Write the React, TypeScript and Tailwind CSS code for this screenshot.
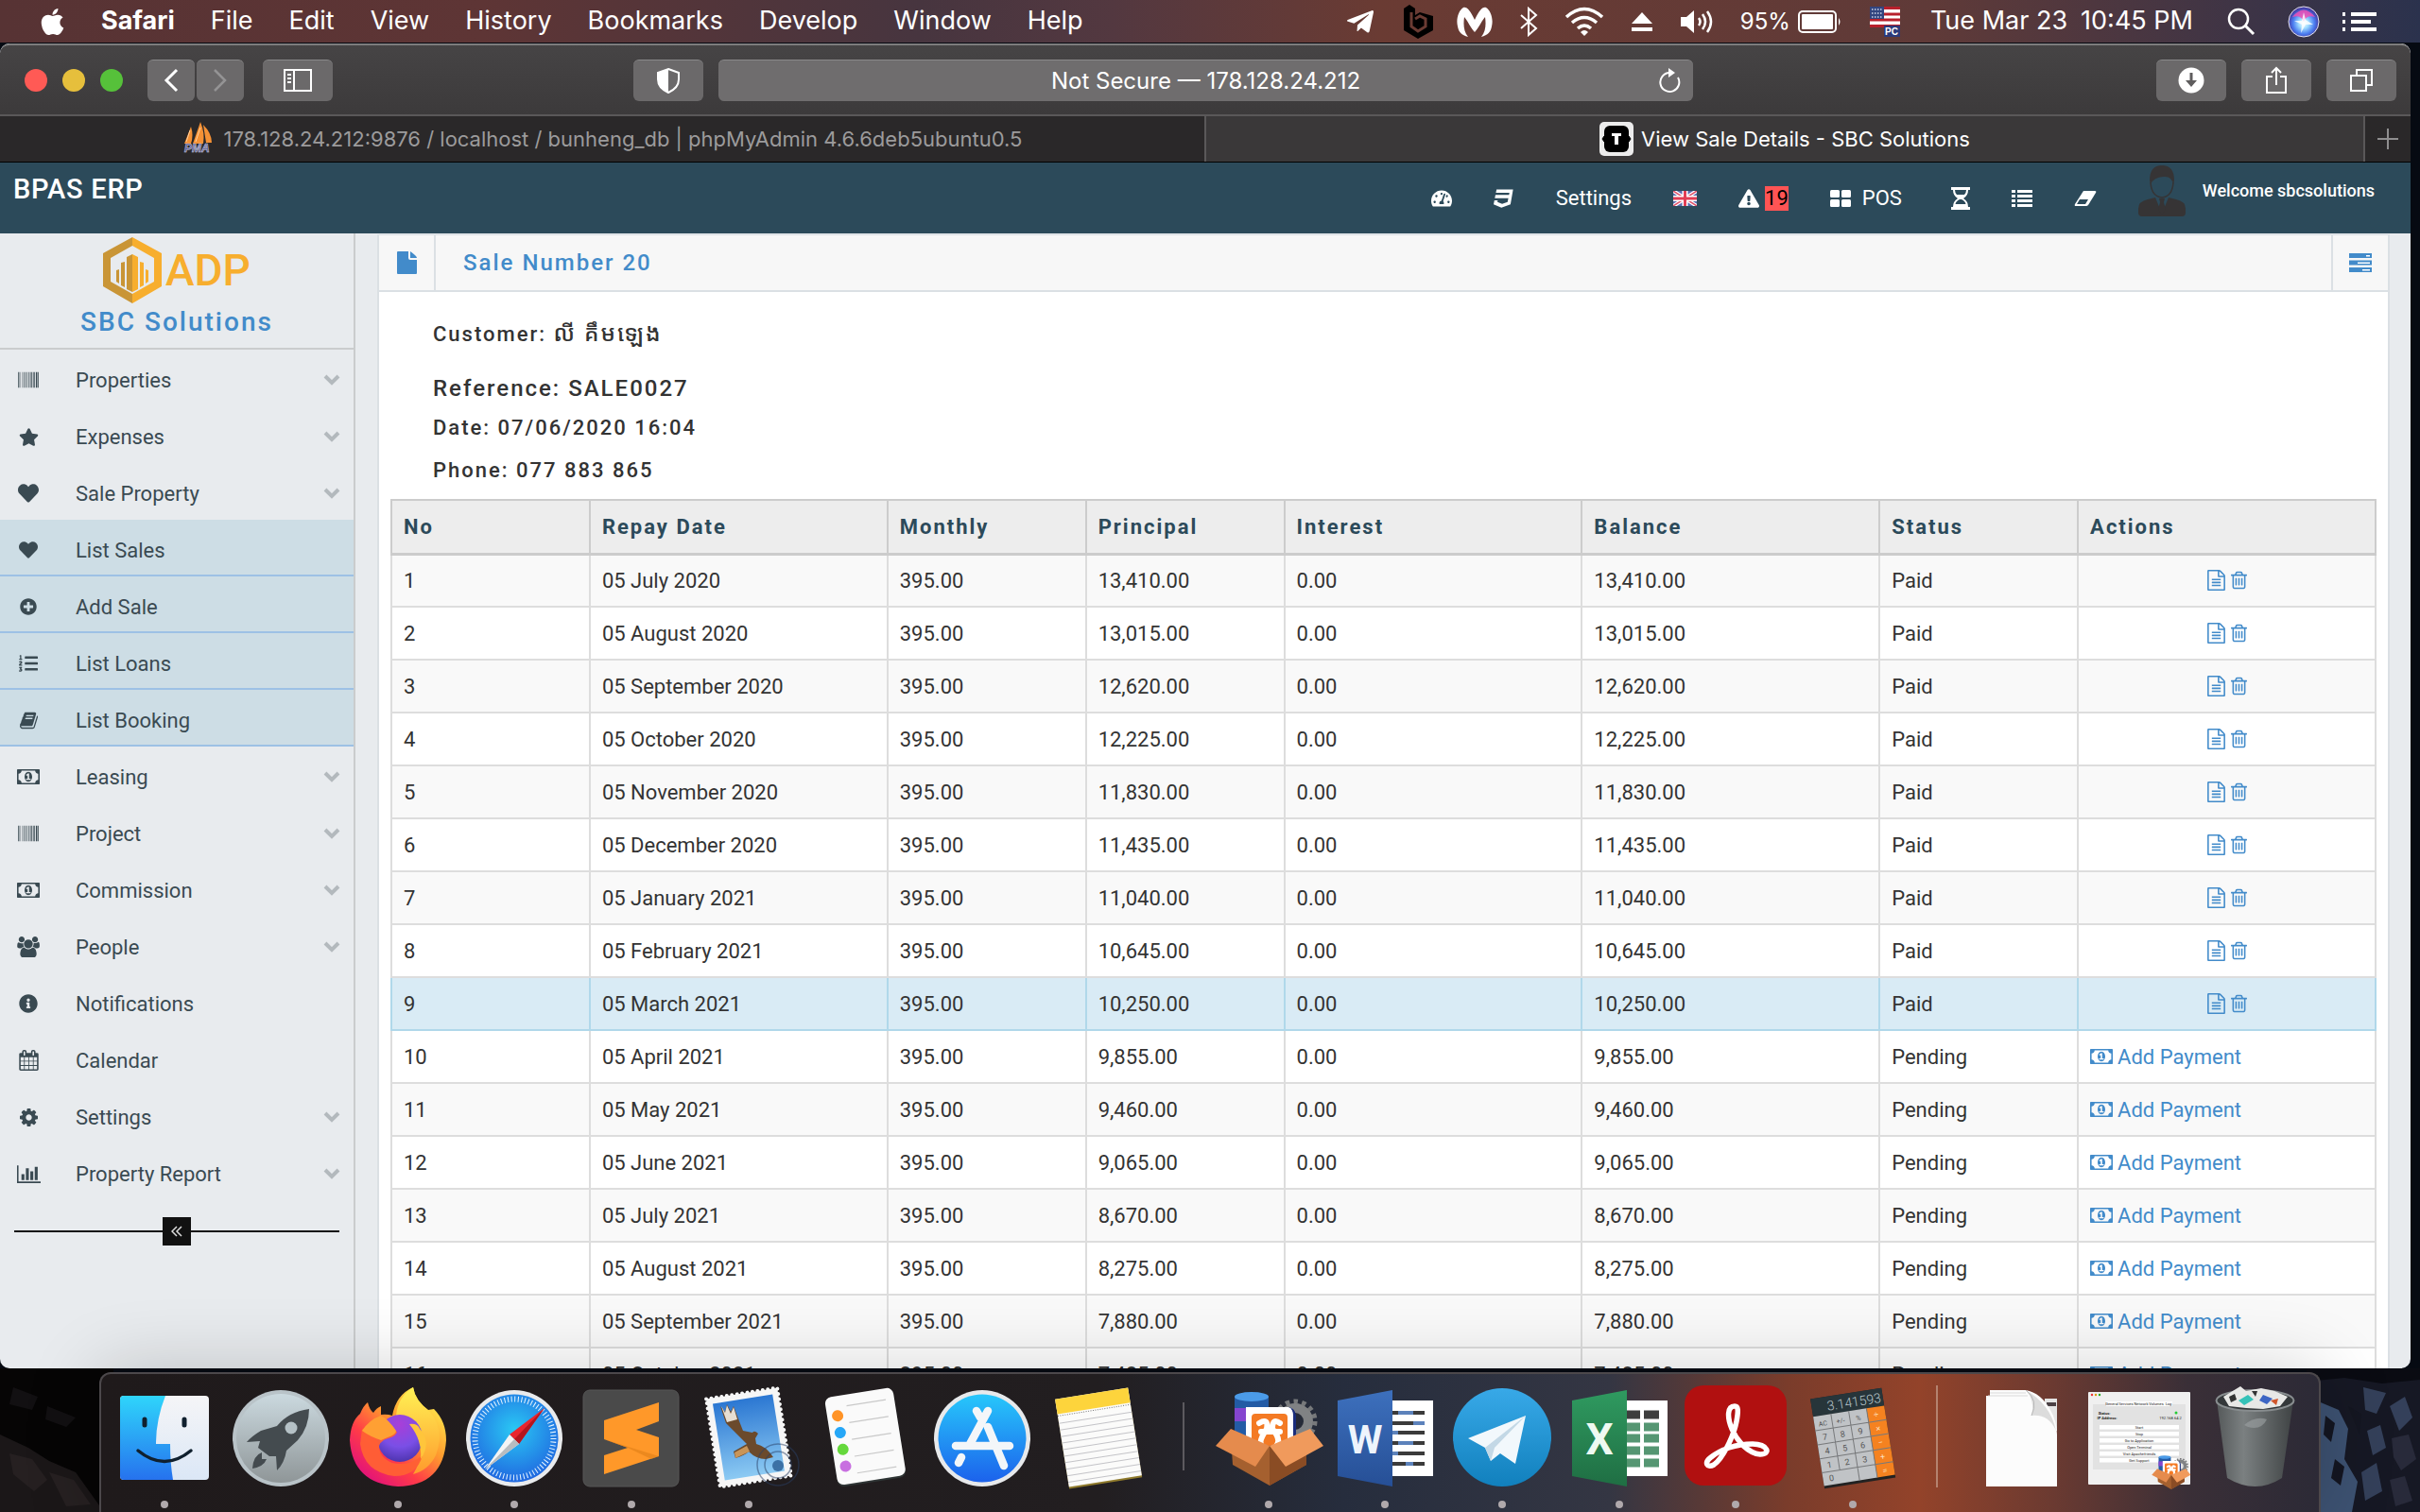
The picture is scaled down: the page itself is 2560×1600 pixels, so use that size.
import React from "react";
import type { ReactNode } from "react";
import { FaBarcode, FaStar, FaHeart, FaPlusCircle, FaListOl, FaInfoCircle, FaTachometerAlt, FaCss3, FaExclamationTriangle, FaApple, FaTelegramPlane } from "react-icons/fa";

/* ---------- small glyphs ---------- */

function Glyph({ box, d, className }: { box: string; d: string; className: string }) {
  return (
    <svg viewBox={box} className={className} fill="currentColor" aria-hidden="true">
      <path d={d} />
    </svg>
  );
}

const FILE_TEXT =
  "M1468 380q28 28 48 76t20 88v1152q0 40-28 68t-68 28h-1344q-40 0-68-28t-28-68v-1600q0-40 28-68t68-28h896q40 0 88 20t76 48zM1024 136v376h376q-10-29-22-41l-313-313q-12-12-41-22zM1408 1664v-1024h-416q-40 0-68-28t-28-68v-416h-768v1536h1280zM384 800q0-14 9-23t23-9h704q14 0 23 9t9 23v64q0 14-9 23t-23 9h-704q-14 0-23-9t-9-23v-64zM1120 1024q14 0 23 9t9 23v64q0 14-9 23t-23 9h-704q-14 0-23-9t-9-23v-64q0-14 9-23t23-9h704zM1120 1280q14 0 23 9t9 23v64q0 14-9 23t-23 9h-704q-14 0-23-9t-9-23v-64q0-14 9-23t23-9h704z";
const TRASH =
  "M512 736v576q0 14-9 23t-23 9h-64q-14 0-23-9t-9-23v-576q0-14 9-23t23-9h64q14 0 23 9t9 23zM768 736v576q0 14-9 23t-23 9h-64q-14 0-23-9t-9-23v-576q0-14 9-23t23-9h64q14 0 23 9t9 23zM1024 736v576q0 14-9 23t-23 9h-64q-14 0-23-9t-9-23v-576q0-14 9-23t23-9h64q14 0 23 9t9 23zM1152 1460v-948h-896v948q0 22 7 40.5t14.5 27 10.5 8.5h832q3 0 10.5-8.5t14.5-27 7-40.5zM480 384h448l-48-117q-7-9-17-11h-317q-10 2-17 11zM1408 416v64q0 14-9 23t-23 9h-96v948q0 83-47 143.5t-113 60.5h-832q-66 0-113-58.5t-47-141.5v-952h-96q-14 0-23-9t-9-23v-64q0-14 9-23t23-9h309l70-167q15-37 54-63t79-26h320q40 0 79 26t54 63l70 167h309q14 0 23 9t9 23z";
const MONEY =
  "M768 1152h384v-96h-128v-448h-114l-148 137 77 80q42-37 55-57h2v288h-128v96zM1280 896q0 70-21 142t-59.5 134-101.5 101-138 39-138-39-101.5-101-59.5-134-21-142 21-142 59.5-134 101.5-101 138-39 138 39 101.5 101 59.5 134 21 142zM1792 1152v-512q-106 0-181-75t-75-181h-1152q0 106-75 181t-181 75v512q106 0 181 75t75 181h1152q0-106 75-181t181-75zM1920 320v1152q0 26-19 45t-45 19h-1792q-26 0-45-19t-19-45v-1152q0-26 19-45t45-19h1792q26 0 45 19t19 45z";
const USERS =
  "M593 896q-162 5-265 128h-134q-82 0-138-40.5t-56-118.5q0-353 124-353 6 0 43.5 21t97.5 42.5 119 21.5q67 0 133-23-5 37-5 66 0 159 93 290zM1664 1533q0 120-73 189.5t-194 69.5h-874q-121 0-194-69.5t-73-189.5q0-53 3.5-103.5t14-109 26.5-108.5 43-97.5 62-81 85.5-53.5 111.5-20q10 0 43 21.5t73 48 107 48 135 21.5 135-21.5 107-48 73-48 43-21.5q61 0 111.5 20t85.5 53.5 62 81 43 97.5 26.5 108.5 14 109 3.5 103.5zM640 256q0 106-75 181t-181 75-181-75-75-181 75-181 181-75 181 75 75 181zM1344 640q0 159-112.5 271.5t-271.5 112.5-271.5-112.5-112.5-271.5 112.5-271.5 271.5-112.5 271.5 112.5 112.5 271.5zM1920 865q0 78-56 118.5t-138 40.5h-134q-103-123-265-128 93-131 93-290 0-29-5-66 66 23 133 23 59 0 119-21.5t97.5-42.5 43.5-21q124 0 124 353zM1792 256q0 106-75 181t-181 75-181-75-75-181 75-181 181-75 181 75 75 181z";
const CHART =
  "M640 896v512H384V896h256zm384-512v1024H768V384h256zm1024 1152v128H0V128h128v1408h1920zM1408 640v768h-256V640h256zm384-384v1152h-256V256h256z";
const BOOK =
  "M1639 478q40 57 18 129l-275 906q-19 64-76.5 107.5t-122.5 43.5h-923q-77 0-148.5-53.5t-99.5-131.5q-24-67-2-127 0-4 3-27t4-37q1-8-3-21.5t-3-19.5q2-11 8-21t16.5-23.5 16.5-23.5q23-38 45-91.5t30-91.5q3-10 .5-30t-.5-28q3-11 17-28t17-23q21-36 42-92t25-90q1-9-2.5-32t.5-28q4-13 22-30.5t22-22.5q19-26 42.5-84.5t27.5-96.5q1-8-3-25.5t-2-26.5q2-8 9-18t18-23 17-21q8-12 16.5-30.5t15-35 16-36 19.5-32 26.5-23.5 36-11.5 47.5 5.5l-1 3q38-9 51-9h761q74 0 114 56t18 130l-274 906q-36 119-71.5 153.5t-128.5 34.5h-869q-27 0-38 15-11 16-1 43 24 70 144 70h923q29 0 56-15.5t35-41.5l300-987q7-22 5-57 38 15 59 43zM575 480q-4 13 2 22.5t20 9.5h608q13 0 25.5-9.5t16.5-22.5l21-64q4-13-2-22.5t-20-9.5h-608q-13 0-25.5 9.5t-16.5 22.5zM492 736q-4 13 2 22.5t20 9.5h608q13 0 25.5-9.5t16.5-22.5l21-64q4-13-2-22.5t-20-9.5h-608q-13 0-25.5 9.5t-16.5 22.5z";
const CALENDAR =
  "M128 1664h288v-288h-288v288zM480 1664h320v-288h-320v288zM128 1312h288v-320h-288v320zM480 1312h320v-320h-320v320zM128 928h288v-288h-288v288zM864 1664h320v-288h-320v288zM480 928h320v-288h-320v288zM1248 1664h288v-288h-288v288zM864 1312h320v-320h-320v320zM512 448v-288q0-13-9.5-22.5t-22.5-9.5h-64q-13 0-22.5 9.5t-9.5 22.5v288q0 13 9.5 22.5t22.5 9.5h64q13 0 22.5-9.5t9.5-22.5zM1248 1312h288v-320h-288v320zM864 928h320v-288h-320v288zM1248 928h288v-288h-288v288zM1280 448v-288q0-13-9.5-22.5t-22.5-9.5h-64q-13 0-22.5 9.5t-9.5 22.5v288q0 13 9.5 22.5t22.5 9.5h64q13 0 22.5-9.5t9.5-22.5zM1664 384v1280q0 52-38 90t-90 38h-1408q-52 0-90-38t-38-90v-1280q0-52 38-90t90-38h128v-96q0-66 47-113t113-47h64q66 0 113 47t47 113v96h384v-96q0-66 47-113t113-47h64q66 0 113 47t47 113v96h128q52 0 90 38t38 90z";
const COG =
  "M1024 896q0-106-75-181t-181-75-181 75-75 181 75 181 181 75 181-75 75-181zM1536 787v222q0 12-8 23t-20 13l-185 28q-19 54-39 91 35 50 107 138 10 12 10 25t-9 23q-27 37-99 108t-94 71q-12 0-26-9l-138-108q-44 23-91 38-16 136-29 186-7 28-36 28h-222q-14 0-24.5-8.5t-11.5-21.5l-28-184q-49-16-90-37l-141 107q-10 9-25 9-14 0-25-11-126-114-165-168-7-10-7-23 0-12 8-23 15-21 51-66.5t54-70.5q-27-50-41-99l-183-27q-13-2-21-12.5t-8-23.5v-222q0-12 8-23t19-13l186-28q14-46 39-92-40-57-107-138-10-12-10-24 0-10 9-23 26-36 98.5-107.5t94.5-71.5q13 0 26 10l138 107q44-23 91-38 16-136 29-186 7-28 36-28h222q14 0 24.5 8.5t11.5 21.5l28 184q49 16 90 37l142-107q9-9 24-9 13 0 25 10 129 119 165 170 7 8 7 22 0 12-8 23-15 21-51 66.5t-54 70.5q26 50 41 98l183 28q13 2 21 12.5t8 23.5z";

function Money({ className }: { className: string }) {
  return <Glyph box="0 256 1920 1280" d={MONEY} className={className} />;
}

function Chevron() {
  return (
    <svg viewBox="0 0 18 12" className="h-3 w-[18px] text-[#b3b9bd]" fill="none" stroke="currentColor" strokeWidth="4" aria-hidden="true">
      <path d="M2 2 L9 9 L16 2" />
    </svg>
  );
}

/* ---------- system menu bar ---------- */

const MENUS = ["File", "Edit", "View", "History", "Bookmarks", "Develop", "Window", "Help"];

function StatusIcons() {
  return (
    <>
      <FaTelegramPlane className="h-8 w-8" />
      <svg viewBox="0 0 34 38" className="ml-7 h-[38px] w-[34px]" aria-hidden="true">
        <path d="M8 1 L14 5 V12 L19 9 L33 13 V28 L17 37 L2 28 V5 Z" fill="#000" />
        <path d="M10 9 V24 L17 29 L25 24 V16 L19 13 L14 16" fill="none" stroke="#6a3b33" strokeWidth="3" />
        <circle cx="17.500" cy="21" r="3.500" fill="#000" />
      </svg>
      <svg viewBox="0 0 38 34" className="ml-6 h-[34px] w-[38px]" fill="currentColor" aria-hidden="true">
        <path d="M7 2 C11 1 14 5 19 15 C24 5 27 1 31 2 C36 5 39 14 37 22 C36 28 33 31 26 33 C31 27 31 19 30 12 C27 15 23 24 19 28 C15 24 11 15 8 12 C7 19 7 27 12 33 C5 31 2 28 1 22 C-1 14 2 5 7 2 Z" />
      </svg>
      <svg viewBox="0 0 20 32" className="ml-7 h-8 w-5" fill="none" stroke="currentColor" strokeWidth="2" aria-hidden="true">
        <path d="M2 9 L18 23 L10 30 V2 L18 9 L2 23" />
      </svg>
      <svg viewBox="0 0 42 32" className="ml-7 h-8 w-[42px]" fill="none" stroke="currentColor" strokeWidth="3.500" aria-hidden="true">
        <path d="M2 11 Q21 -6 40 11 M8 17 Q21 6 34 17 M14 23 Q21 17 28 23" />
        <path d="M17 27 Q21 23 25 27 L21 31 Z" fill="currentColor" stroke="none" />
      </svg>
      <svg viewBox="0 0 24 22" className="ml-7 h-[22px] w-6" fill="currentColor" aria-hidden="true">
        <path d="M12 1 L23 13 H1 Z M1 17 H23 V21 H1 Z" />
      </svg>
      <svg viewBox="0 0 36 28" className="ml-7 h-7 w-9" fill="none" stroke="currentColor" strokeWidth="2.500" aria-hidden="true">
        <path d="M1 9 H7 L15 2 V26 L7 19 H1 Z" fill="currentColor" stroke="none" />
        <path d="M20 10 Q23 14 20 18 M24 6 Q30 14 24 22 M29 3 Q37 14 29 25" />
      </svg>
      <span className="ml-7 text-[24px]">95%</span>
      <svg viewBox="0 0 46 24" className="ml-2 h-6 w-[46px]" aria-hidden="true">
        <rect x="1" y="1" width="39" height="22" rx="4" fill="none" stroke="#fff" strokeWidth="2" />
        <rect x="4" y="4" width="33" height="16" rx="1" fill="#fff" />
        <path d="M43 8 Q46 12 43 16 Z" fill="#fff" />
      </svg>
      <svg viewBox="0 0 32 32" className="ml-[30px] h-8 w-8" aria-hidden="true">
        <rect width="32" height="22" fill="#fff" />
        <path d="M0 1.500 H32 M0 8 H32 M0 14 H32 M0 20.500 H32" stroke="#b8202c" strokeWidth="3" />
        <rect width="15" height="13" fill="#32457f" />
        <path d="M2 3 H14 M2 7 H14 M2 11 H14" stroke="#cfd6ea" strokeWidth="1.500" strokeDasharray="1.500 1.500" />
        <rect x="15" y="20" width="17" height="12" fill="#2b3a7a" />
        <text x="16" y="30" fontSize="10" fontWeight="700" fill="#fff" fontFamily="Liberation Sans, sans-serif">PC</text>
      </svg>
    </>
  );
}

function MenuBar() {
  return (
    <header className="flex h-[45px] shrink-0 items-center justify-between bg-linear-[90deg,#573334_0%,#5e3535_20%,#47353f_38%,#533840_46%,#6a3b33_57%,#5f3a38_80%,#3d3446_93%,#2b324d_100%] pr-[46px] pl-[42px] font-[Inter,sans-serif] text-[27px] text-white">
      <nav className="flex items-center gap-[38px]" aria-label="Menu bar">
        <button type="button" aria-label="Apple menu"><FaApple className="h-8 w-[27px]" /></button>
        <button type="button" className="font-bold">Safari</button>
        {MENUS.map((m) => (
          <button type="button" key={m}>{m}</button>
        ))}
      </nav>
      <div className="flex items-center">
        <StatusIcons />
        <time className="ml-8 flex gap-[14px]"><span>Tue Mar 23</span><span>10:45 PM</span></time>
        <button type="button" aria-label="Search" className="ml-9">
          <svg viewBox="0 0 30 30" className="h-[30px] w-[30px]" fill="none" stroke="currentColor" strokeWidth="2.500">
            <circle cx="12" cy="12" r="10" />
            <path d="M19 19 L28 28" strokeWidth="3" />
          </svg>
        </button>
        <button type="button" aria-label="Siri" className="ml-[34px]">
          <svg viewBox="0 0 34 34" className="h-[34px] w-[34px]">
            <defs>
              <radialGradient id="siri" cx="50%" cy="55%" r="55%">
                <stop offset="0" stopColor="#fff" />
                <stop offset=".3" stopColor="#9fdcff" />
                <stop offset=".65" stopColor="#4a7cf0" />
                <stop offset="1" stopColor="#43288f" />
              </radialGradient>
            </defs>
            <circle cx="17" cy="17" r="16" fill="url(#siri)" stroke="#e6e6f0" />
            <path d="M5 12 Q17 -3 29 12 Q20 9 17 17 Q14 9 5 12" fill="#f04fb4" opacity=".85" />
            <path d="M17 7 L19 15 L27 20 L19 20 L14 29 L15 20 L7 16 L15 16 Z" fill="#fff" opacity=".8" />
          </svg>
        </button>
        <button type="button" aria-label="Notification centre" className="ml-6">
          <svg viewBox="0 0 36 20" className="h-5 w-9" fill="currentColor">
            <path d="M0 0h3v4H0z M9 0h27v4H9z M0 8h3v4H0z M9 8h21v4H9z M0 16h3v4H0z M9 16h27v4H9z" />
          </svg>
        </button>
      </div>
    </header>
  );
}

/* ---------- browser chrome ---------- */

function ToolButton({ label, children, className }: { label: string; children: ReactNode; className: string }) {
  return (
    <button type="button" aria-label={label} className={`flex h-11 items-center justify-center rounded-md border-t border-[#8a898a] bg-[#6b696a] text-white ${className}`}>
      {children}
    </button>
  );
}

function Toolbar() {
  return (
    <div className="flex h-[75px] shrink-0 items-center rounded-t-[10px] border-t-2 border-[#7d7c7d] bg-linear-to-b from-[#464445] to-[#3c3a3b] pr-[15px] pl-[26px]">
      <div className="flex w-[644px] items-center">
        <div className="flex gap-4">
          <button type="button" aria-label="Close" className="size-6 rounded-full bg-[#ff5a55]" />
          <button type="button" aria-label="Minimise" className="size-6 rounded-full bg-[#e6bf3c]" />
          <button type="button" aria-label="Zoom" className="size-6 rounded-full bg-[#56c13a]" />
        </div>
        <ToolButton label="Back" className="ml-[26px] w-[50px]">
          <svg viewBox="0 0 16 26" className="h-[26px] w-4" fill="none" stroke="currentColor" strokeWidth="3"><path d="M14 2 L3 13 L14 24" /></svg>
        </ToolButton>
        <ToolButton label="Forward" className="ml-[2px] w-[50px]">
          <svg viewBox="0 0 16 26" className="h-[26px] w-4 text-[#949394]" fill="none" stroke="currentColor" strokeWidth="2.500"><path d="M2 2 L13 13 L2 24" /></svg>
        </ToolButton>
        <ToolButton label="Sidebar" className="ml-5 w-[74px]">
          <svg viewBox="0 0 32 26" className="h-[26px] w-8" fill="none" stroke="currentColor" strokeWidth="2"><path d="M2 2 H30 V24 H2 Z M12 2 V24 M5 7 H9 M5 11 H9 M5 15 H9" /></svg>
        </ToolButton>
      </div>
      <ToolButton label="Privacy report" className="w-[74px]">
        <svg viewBox="0 0 26 28" className="h-7 w-[26px]"><path d="M13 2 L24 6 V13 Q24 22 13 27 Q2 22 2 13 V6 Z" fill="none" stroke="#fff" strokeWidth="2" /><path d="M13 2 V27 Q2 22 2 13 V6 Z" fill="#fff" /></svg>
      </ToolButton>
      <div className="ml-4 flex h-11 flex-1 items-center rounded-md border-t border-[#8a898a] bg-[#6f6d6e] pr-3 text-white">
        <input type="text" readOnly aria-label="Address" value="Not Secure — 178.128.24.212" className="h-full min-w-0 flex-1 bg-transparent pl-[38px] text-center text-[24px] outline-none" />
        <button type="button" aria-label="Reload">
          <svg viewBox="0 0 26 28" className="h-7 w-[26px]" fill="none" stroke="currentColor" strokeWidth="2"><path d="M22 11 A10 10 0 1 1 13 6" /><path d="M12 1 L19 6 L12 11 Z" fill="currentColor" stroke="none" /></svg>
        </button>
      </div>
      <div className="ml-[490px] flex gap-4">
        <ToolButton label="Downloads" className="w-[74px]">
          <svg viewBox="0 0 28 28" className="size-7"><circle cx="14" cy="14" r="13.500" fill="#fff" /><path d="M12.500 6 H15.500 V14 H20 L14 21 L8 14 H12.500 Z" fill="#5f5d5e" /></svg>
        </ToolButton>
        <ToolButton label="Share" className="w-[74px]">
          <svg viewBox="0 0 24 30" className="h-[30px] w-6" fill="none" stroke="currentColor" strokeWidth="2"><path d="M8 11 H2 V28 H22 V11 H16 M12 20 V2 M7 7 L12 2 L17 7" /></svg>
        </ToolButton>
        <ToolButton label="Tab overview" className="w-[74px]">
          <svg viewBox="0 0 26 26" className="size-[26px]" fill="none" stroke="currentColor" strokeWidth="2"><path d="M2 8 H18 V24 H2 Z M8 8 V2 H24 V18 H18" /></svg>
        </ToolButton>
      </div>
    </div>
  );
}

function TabBar() {
  return (
    <div role="tablist" className="flex h-[51px] shrink-0 border-y border-t-2 border-t-[#5a5859] border-b-black bg-[#2a2829] text-[22px]">
      <button type="button" role="tab" aria-selected="false" className="flex flex-51 items-center justify-center gap-2 text-[#9c9b9c]">
        <svg viewBox="0 0 36 36" className="size-9" aria-hidden="true">
          <path d="M9 5 Q12 14 9 23 H2 Z M19 0 Q24 12 22 23 H11 Z M22 3 Q31 12 31 22 H25 Z" fill="#f59135" />
          <path d="M4 21 L8 9 M14 21 L19 6" stroke="#ffd0a0" strokeWidth="1" />
          <text x="2" y="32" fontSize="12" fontWeight="700" fontStyle="italic" fill="#4d4f8f" stroke="#c9c9dd" strokeWidth=".6" fontFamily="Liberation Sans, sans-serif">PMA</text>
        </svg>
        178.128.24.212:9876 / localhost / bunheng_db | phpMyAdmin 4.6.6deb5ubuntu0.5
      </button>
      <button type="button" role="tab" aria-selected="true" className="flex flex-49 items-center justify-center gap-2 border-x-2 border-[#5a5859] bg-[#3a3839] text-white">
        <svg viewBox="0 0 36 36" className="size-9" aria-hidden="true">
          <rect width="36" height="36" rx="5" fill="#ececec" />
          <rect x="5" y="4" width="26" height="28" rx="6" fill="#000" />
          <path d="M5 15 L3 18 L5 21 M31 15 L33 18 L31 21" fill="#000" stroke="#000" />
          <path d="M13 12 H23 V15 H20 V24 H16 V15 H13 Z" fill="#fff" />
        </svg>
        View Sale Details - SBC Solutions
      </button>
      <button type="button" aria-label="New tab" className="flex w-12 items-center justify-center text-[#8f8e8f]">
        <svg viewBox="0 0 22 22" className="size-[22px]" stroke="currentColor" strokeWidth="2"><path d="M11 0 V22 M0 11 H22" /></svg>
      </button>
    </div>
  );
}

/* ---------- application ---------- */

function AppHeader() {
  return (
    <div className="flex h-[75px] shrink-0 justify-between bg-[#2c4a5a] pr-[38px] pl-[14px] text-white">
      <a href="#home" className="mt-2 h-10 text-[29px] leading-10 font-medium tracking-wide">BPAS ERP</a>
      <nav className="flex items-center gap-11 text-[22px]" aria-label="Tools">
        <a href="#dashboard" aria-label="Dashboard"><FaTachometerAlt className="size-[22px]" /></a>
        <a href="#theme" aria-label="Theme"><FaCss3 className="size-[22px]" /></a>
        <a href="#settings">Settings</a>
        <a href="#language" aria-label="English">
          <svg viewBox="0 0 25 16" className="h-4 w-[25px]">
            <rect width="25" height="16" fill="#5b6cb0" />
            <path d="M0 0 L25 16 M25 0 L0 16" stroke="#fff" strokeWidth="4" />
            <path d="M0 0 L25 16 M25 0 L0 16" stroke="#e2526a" strokeWidth="1.500" />
            <path d="M12.500 0 V16 M0 8 H25" stroke="#fff" strokeWidth="6" />
            <path d="M12.500 0 V16 M0 8 H25" stroke="#e23e55" strokeWidth="3" />
          </svg>
        </a>
        <a href="#alerts" className="flex items-center gap-[6px]">
          <FaExclamationTriangle className="size-[22px]" />
          <span className="bg-[#ff5454] leading-[26px] text-black">19</span>
        </a>
        <a href="#pos" className="flex items-center gap-3">
          <svg viewBox="0 0 22 18" className="h-[18px] w-[22px]" fill="currentColor"><rect width="10" height="8" rx="1.500" /><rect x="12" width="10" height="8" rx="1.500" /><rect y="10" width="10" height="8" rx="1.500" /><rect x="12" y="10" width="10" height="8" rx="1.500" /></svg>
          POS
        </a>
        <a href="#pending" aria-label="Pending" className="ml-2">
          <svg viewBox="0 0 20 24" className="h-6 w-5" fill="currentColor"><path fillRule="evenodd" d="M0 0H20V3H18Q18 9 13 12Q18 15 18 21H20V24H0V21H2Q2 15 7 12Q2 9 2 3H0Z M4 3Q4 6 6 8H14Q16 6 16 3Z M9 13Q5 15 4.500 18H15.500Q15 15 11 13Z" /></svg>
        </a>
        <a href="#list" aria-label="List">
          <svg viewBox="0 0 22 18" className="h-[18px] w-[22px]" fill="currentColor"><path d="M0 0h4v3H0z M6 0h16v3H6z M0 5h4v3H0z M6 5h16v3H6z M0 10h4v3H0z M6 10h16v3H6z M0 15h4v3H0z M6 15h16v3H6z" /></svg>
        </a>
        <a href="#clear" aria-label="Clear">
          <svg viewBox="0 0 24 16" className="h-4 w-6"><path d="M10 0 H22 Q24 0 23 2 L15 15 Q14 16 13 16 H2 Q0 16 1 14 Z" fill="#fff" /><path d="M6 9 H15 L12 14 H3 Z" fill="#2c4a5a" /></svg>
        </a>
        <a href="#profile" className="flex h-full items-start gap-[18px] text-[18px] font-medium">
          <svg viewBox="0 0 50 54" className="mt-[3px] h-[54px] w-[50px]" aria-hidden="true">
            <path d="M0 46 Q0 38 10 36 L18 34 L25 51 L32 34 L40 36 Q50 38 50 46 V50 Q50 54 46 54 H4 Q0 54 0 50 Z" fill="#363435" />
            <path d="M22 35 H28 L27 39 L29 47 L25 52 L21 47 L23 39 Z" fill="#363435" />
            <path d="M12 16 Q12 0 25 0 Q38 0 38 16 L37 20 Q35 11 27 12 Q17 12 13 20 Z" fill="#363435" />
            <path d="M13 18 Q14 33 25 34 Q36 33 37 18" fill="none" stroke="#363435" strokeWidth="1.500" />
          </svg>
          <span className="mt-4 leading-7">Welcome sbcsolutions</span>
        </a>
      </nav>
    </div>
  );
}

type Item = { label: string; icon: ReactNode; sub?: boolean; chevron?: boolean };
const ITEMS: Item[] = [
  { label: "Properties", icon: <FaBarcode className="h-[22px] w-6" />, chevron: true },
  { label: "Expenses", icon: <FaStar className="size-[21px]" />, chevron: true },
  { label: "Sale Property", icon: <FaHeart className="size-[22px]" />, chevron: true },
  { label: "List Sales", icon: <FaHeart className="size-5" />, sub: true },
  { label: "Add Sale", icon: <FaPlusCircle className="size-[18px]" />, sub: true },
  { label: "List Loans", icon: <FaListOl className="size-5" />, sub: true },
  { label: "List Booking", icon: <Glyph box="0 64 1664 1664" d={BOOK} className="size-[19px]" />, sub: true },
  { label: "Leasing", icon: <Money className="h-4 w-6" />, chevron: true },
  { label: "Project", icon: <FaBarcode className="h-[22px] w-6" />, chevron: true },
  { label: "Commission", icon: <Money className="h-4 w-6" />, chevron: true },
  { label: "People", icon: <Glyph box="0 0 1920 1792" d={USERS} className="h-[22px] w-6" />, chevron: true },
  { label: "Notifications", icon: <FaInfoCircle className="size-5" /> },
  { label: "Calendar", icon: <Glyph box="0 0 1664 1792" d={CALENDAR} className="h-[22px] w-[21px]" /> },
  { label: "Settings", icon: <Glyph box="0 128 1536 1536" d={COG} className="size-[19px]" />, chevron: true },
  { label: "Property Report", icon: <Glyph box="0 128 2048 1536" d={CHART} className="h-[19px] w-[25px]" />, chevron: true },
];

function Sidebar() {
  return (
    <aside className="flex w-[376px] shrink-0 flex-col border-r-2 border-[#cacccd] text-[#3a4a52]">
      <a href="#home" className="flex h-[123px] flex-col items-center border-b-2 border-[#cacccd] pt-1">
        <span className="flex h-[70px] items-center gap-1">
          <svg viewBox="0 0 62 70" className="h-[70px] w-[62px]" aria-hidden="true">
            <path d="M31 0 L0 17 V52 L31 70 V60 L8 47 V22 L31 9 Z" fill="#c99536" />
            <path d="M31 0 L62 17 V52 L31 70 V60 L54 47 V22 L31 9 Z" fill="#f7ae2e" />
            <path d="M31 18 L25 21 V55 L31 58 Z M19 27 L23 26 V53 L19 51 Z M14 35 L17 34 V49 L14 47 Z" fill="#c99536" />
            <path d="M31 18 L37 21 V55 L31 58 Z M39 26 L43 27 V51 L39 53 Z M45 34 L48 35 V47 L45 49 Z" fill="#f7ae2e" />
          </svg>
          <span className="text-[46px] leading-[70px] font-medium text-[#f7ae2e]">ADP</span>
        </span>
        <span className="text-[28px] leading-10 font-medium tracking-[2px] text-[#428bca]">SBC Solutions</span>
      </a>
      <nav aria-label="Main">
        {ITEMS.map((it) => (
          <a
            key={it.label}
            href={`#${it.label.toLowerCase().replace(/ /g, "-")}`}
            className={
              it.sub
                ? "flex h-[60px] items-center border-b-2 border-[#9dc1e5] bg-[#cddde5] pt-[6px] pr-[14px] pl-[15px] text-[22px]"
                : "flex h-[60px] items-center pt-1 pr-[14px] pl-[15px] text-[22px]"
            }
          >
            <span className="flex w-[30px] items-center justify-center">{it.icon}</span>
            <span className="ml-[35px] flex-1">{it.label}</span>
            {it.chevron && <Chevron />}
          </a>
        ))}
      </nav>
      <div className="mt-[18px] flex items-center px-[15px]">
        <span className="h-[2px] flex-1 bg-[#111]" />
        <button type="button" aria-label="Collapse sidebar" className="flex size-[30px] items-center justify-center bg-[#111] text-[#ddd]">
          <svg viewBox="0 0 12 12" className="size-3" fill="none" stroke="currentColor" strokeWidth="1.500"><path d="M6 1 L1 6 L6 11 M11 1 L6 6 L11 11" /></svg>
        </button>
        <span className="h-[2px] flex-1 bg-[#111]" />
      </div>
    </aside>
  );
}

const DATES = [
  "05 July 2020", "05 August 2020", "05 September 2020", "05 October 2020", "05 November 2020", "05 December 2020",
  "05 January 2021", "05 February 2021", "05 March 2021", "05 April 2021", "05 May 2021", "05 June 2021",
  "05 July 2021", "05 August 2021", "05 September 2021", "05 October 2021",
];
const ROWS = DATES.map((date, i) => ({ no: i + 1, date, amount: `${(13410 - i * 395).toLocaleString("en-US")}.00`, paid: i < 9, current: i === 8 }));

const COLUMNS = [
  { name: "No", width: "w-[10%]" },
  { name: "Repay Date", width: "w-[15%]" },
  { name: "Monthly", width: "w-[10%]" },
  { name: "Principal", width: "w-[10%]" },
  { name: "Interest", width: "w-[15%]" },
  { name: "Balance", width: "w-[15%]" },
  { name: "Status", width: "w-[10%]" },
  { name: "Actions", width: "w-[15%]" },
];

function Cell({ current, children }: { current: boolean; children: ReactNode }) {
  return (
    <td className={current ? "h-14 border-2 border-t-[#ddd] border-r-[#b0d8ea] border-b-[#b0d8ea] border-l-[#b0d8ea] px-3" : "h-14 border-2 border-[#ddd] px-3"}>
      {children}
    </td>
  );
}

function PaymentTable() {
  return (
    <table className="mt-[14px] w-full table-fixed border-collapse text-[22px] text-[#333]">
      <thead>
        <tr>
          {COLUMNS.map((c) => (
            <th key={c.name} scope="col" className={`h-[57px] border-2 border-b-3 border-[#ccc] bg-[#ededed] px-3 text-left font-bold tracking-[2px] text-[#2c4a5a] ${c.width}`}>
              {c.name}
            </th>
          ))}
        </tr>
      </thead>
      <tbody>
        {ROWS.map((r) => (
          <tr key={r.no} className={r.current ? "bg-[#d9ebf5]" : r.no % 2 ? "bg-[#f9f9f9]" : "bg-white"}>
            <Cell current={r.current}>{r.no}</Cell>
            <Cell current={r.current}>{r.date}</Cell>
            <Cell current={r.current}>395.00</Cell>
            <Cell current={r.current}>{r.amount}</Cell>
            <Cell current={r.current}>0.00</Cell>
            <Cell current={r.current}>{r.amount}</Cell>
            <Cell current={r.current}>{r.paid ? "Paid" : "Pending"}</Cell>
            <Cell current={r.current}>
              {r.paid ? (
                <span className="flex items-center justify-center gap-[6px] text-[#428bca]">
                  <a href={`#receipt-${r.no}`} aria-label={`Receipt ${r.no}`}><Glyph box="0 0 1536 1792" d={FILE_TEXT} className="h-[22px] w-[19px]" /></a>
                  <a href={`#delete-${r.no}`} aria-label={`Delete ${r.no}`}><Glyph box="0 64 1408 1664" d={TRASH} className="h-5 w-[17px]" /></a>
                </span>
              ) : (
                <a href={`#pay-${r.no}`} className="flex items-center gap-[5px] text-[#428bca]">
                  <Money className="h-4 w-6" />
                  Add Payment
                </a>
              )}
            </Cell>
          </tr>
        ))}
      </tbody>
    </table>
  );
}

function SalePanel() {
  return (
    <main className="mt-px mr-[22px] ml-[23px] flex min-w-0 flex-1 flex-col border-x-2 border-t border-[#dbe0e4] bg-white">
      <div className="flex h-[60px] shrink-0 items-center border-b-2 border-[#dbe0e4] bg-[#f7f7f7] text-[#428bca]">
        <span className="flex h-full w-[60px] items-center justify-center border-r-2 border-[#dbe0e4]">
          <svg viewBox="0 0 21 24" className="h-6 w-[21px]" fill="currentColor" aria-hidden="true"><path d="M1 0 H12 V7 Q12 9 14 9 H21 V23 Q21 24 20 24 H1 Q0 24 0 23 V1 Q0 0 1 0 Z M14 0 Q21 5 21 7 H14 Z" /></svg>
        </span>
        <h1 className="ml-[29px] flex-1 text-[24px] font-medium tracking-[2px]">Sale Number 20</h1>
        <button type="button" aria-label="Tasks" className="flex h-full w-[60px] items-center justify-center border-l-2 border-[#dbe0e4]">
          <svg viewBox="0 0 24 20" className="h-5 w-6"><path d="M0 0h24v5H0z M0 7.500h24v5H0z M0 15h24v5H0z" fill="#428bca" /><path d="M18 2h4v1.500h-4z M9 9.500h13V11H9z M14 17h8v1.500h-8z" fill="#fff" /></svg>
        </button>
      </div>
      <div className="flex flex-1 flex-col pr-3 pl-3">
        <div className="mt-[26px] pl-[45px] text-[22px] font-medium tracking-[2px] text-[#333]">
          <p className="h-9 leading-9">Customer: <span lang="km" className="text-[24px]">លី គឹមឡេង</span></p>
          <p className="mt-6 text-[24px] leading-8">Reference: SALE0027</p>
          <p className="mt-[10px] leading-8">Date: 07/06/2020 16:04</p>
          <p className="mt-[13px] leading-8">Phone: 077 883 865</p>
        </div>
        <PaymentTable />
      </div>
    </main>
  );
}

/* ---------- dock ---------- */

function Art({ children }: { children: ReactNode }) {
  return <svg viewBox="0 0 108 112" className="h-28 w-[108px] overflow-visible" aria-hidden="true">{children}</svg>;
}

const Finder = () => (
  <Art>
    <defs>
      <linearGradient id="finderL" x1="0" y1="0" x2="0" y2="1"><stop offset="0" stopColor="#2fd5fb" /><stop offset="1" stopColor="#2672ee" /></linearGradient>
      <linearGradient id="finderR" x1="0" y1="0" x2="0" y2="1"><stop offset="0" stopColor="#f5f5f7" /><stop offset="1" stopColor="#dbe7f6" /></linearGradient>
    </defs>
    <rect x="7" y="13" width="94" height="89" rx="4" fill="url(#finderR)" />
    <path d="M11 13 H55 Q45 38 45 64 H60 Q60 84 63 102 H11 Q7 102 7 98 V17 Q7 13 11 13 Z" fill="url(#finderL)" />
    <path d="M33 38 V44 M75 38 V44" stroke="#10202e" strokeWidth="5" strokeLinecap="round" />
    <path d="M26 71 Q54 94 82 71" fill="none" stroke="#10202e" strokeWidth="3.500" strokeLinecap="round" />
  </Art>
);

const Launchpad = () => (
  <Art>
    <defs><linearGradient id="lp" x1="0" y1="0" x2="0" y2="1"><stop offset="0" stopColor="#cbd9df" /><stop offset="1" stopColor="#8f9698" /></linearGradient></defs>
    <circle cx="54" cy="58" r="51" fill="#b9c3c8" />
    <circle cx="54" cy="58" r="47" fill="url(#lp)" />
    <path d="M84 27 Q62 30 50 45 L33 50 Q23 56 18 62 L32 61 L30 68 L42 77 L49 77 L50 92 Q58 84 60 71 L72 60 Q84 46 84 27 Z" fill="#444b4f" />
    <circle cx="65" cy="47" r="6.500" fill="#b5c1c6" />
    <path d="M34 73 Q25 76 24 90 Q36 88 39 80 L34 80 Z" fill="#444b4f" />
  </Art>
);

const Firefox = () => (
  <Art>
    <defs>
      <linearGradient id="fx" x1=".9" y1=".1" x2=".2" y2=".95"><stop offset="0" stopColor="#fff04f" /><stop offset=".4" stopColor="#ff9a2e" /><stop offset=".7" stopColor="#ff3b48" /><stop offset="1" stopColor="#e2127a" /></linearGradient>
      <radialGradient id="fxg" cx=".5" cy=".2" r=".8"><stop offset="0" stopColor="#a83fd8" /><stop offset=".6" stopColor="#7a4fe6" /><stop offset="1" stopColor="#4e35b0" /></radialGradient>
      <linearGradient id="fxy" x1="0" y1="0" x2="0" y2="1"><stop offset="0" stopColor="#fff255" /><stop offset="1" stopColor="#ff9a2c" /></linearGradient>
    </defs>
    <path d="M22 20 Q24 28 28 31 Q31 26 36 24 V33 Q42 32 48 34 Q52 12 70 4 Q72 18 86 28 L92 27 Q105 40 105 60 Q102 108 54 109 Q6 106 3 60 Q4 40 14 32 Q17 24 22 20 Z" fill="url(#fx)" />
    <path d="M70 4 Q72 18 88 30 Q104 50 94 76 Q86 92 70 96 Q86 70 74 46 Q60 36 52 34 Q54 14 70 4 Z" fill="url(#fxy)" />
    <ellipse cx="56" cy="58" rx="24" ry="25" fill="url(#fxg)" />
    <path d="M16 48 Q26 42 36 48 Q48 48 53 51 Q52 56 44 58 Q36 60 34 66 Q34 78 48 84 Q66 88 80 76 Q74 98 50 98 Q18 94 14 64 Z" fill="#ff6034" opacity=".95" />
    <path d="M16 50 Q24 38 36 34 Q44 38 52 50 Q52 54 43 57 L36 60 Q24 56 16 50 Z" fill="#ffa033" />
    <path d="M66 43 Q75 42 77 48 Q90 62 78 80 Q80 60 66 43 Z" fill="#ffc53b" />
  </Art>
);

const Safari = () => (
  <Art>
    <defs><radialGradient id="sf" cx=".5" cy=".4" r=".6"><stop offset="0" stopColor="#2ac8f4" /><stop offset="1" stopColor="#2068e0" /></radialGradient></defs>
    <circle cx="54" cy="58" r="51" fill="#e9ebed" />
    <circle cx="54" cy="58" r="46.500" fill="url(#sf)" />
    <circle cx="54" cy="58" r="41.500" fill="none" stroke="#e8f5ff" strokeWidth="6" strokeDasharray="1 2.620" />
    <path d="M86 26 L49 54 L59 64 Z" fill="#e8262f" />
    <path d="M86 26 L54 59 L59 64 Z" fill="#b4161f" />
    <path d="M23 91 L49 54 L59 64 Z" fill="#f4f4f4" />
    <path d="M23 91 L54 59 L59 64 Z" fill="#b7bcc0" />
  </Art>
);

const Sublime = () => (
  <Art>
    <rect x="3" y="7" width="101" height="102" rx="7" fill="#4a4a4a" stroke="#565656" />
    <path d="M83 20 V40 L59 49 L83 57 V77 L25 96 V76 L50 68 L25 59 V39 Z" fill="#ff9829" />
    <path d="M50 68 L25 59 L83 77 L75 80 Z" fill="#e07f18" opacity=".6" />
  </Art>
);

const Mail = () => (
  <Art>
    <defs><linearGradient id="sky" x1="0" y1="0" x2="0" y2="1"><stop offset="0" stopColor="#2b77d2" /><stop offset="1" stopColor="#8ccaf3" /></linearGradient></defs>
    <g transform="rotate(-9 54 57)">
      <rect x="16" y="10" width="76" height="94" fill="#f6f6f6" />
      <rect x="16" y="10" width="76" height="94" fill="none" stroke="#f6f6f6" strokeWidth="4" strokeDasharray="0 5.500" strokeLinecap="round" />
      <rect x="22" y="16" width="64" height="82" fill="url(#sky)" />
    </g>
    <path d="M52 64 Q38 50 30 42 L24 24 L29 30 L31 22 L35 30 L38 24 Q44 40 48 50 L58 52 Q60 49 64 53 L61 58 L62 64 Q72 66 80 78 L72 80 Q62 80 54 72 Q50 76 40 79 L38 72 Z" fill="#6b4a2c" />
    <path d="M31 41 L25 24 L29 31 L31 23 L35 32 L38 25 L42 38 Z" fill="#e6ded2" />
    <path d="M39 73 L52 66 L55 72 L40 79 Z" fill="#c99558" />
    <circle cx="85" cy="86" r="22" fill="none" stroke="#2a3f66" strokeWidth="1.500" opacity=".5" />
    <circle cx="85" cy="86" r="14" fill="none" stroke="#2a3f66" strokeWidth="1.500" opacity=".5" />
    <circle cx="85" cy="87" r="6" fill="#2a5c92" opacity=".8" />
  </Art>
);

const Reminders = () => (
  <Art>
    <g transform="rotate(-9 54 57)">
      <rect x="18" y="11" width="73" height="94" rx="7" fill="#2e3434" />
      <rect x="18" y="9" width="73" height="94" rx="7" fill="#fafafa" />
      <path d="M40 21 H82 M40 39 H82 M40 57 H82 M40 75 H82 M40 93 H82" stroke="#c9c9c9" strokeWidth="1.200" />
      <circle cx="29" cy="30" r="6" fill="#ff9326" />
      <circle cx="29" cy="48" r="6" fill="#26a7f7" />
      <circle cx="29" cy="66" r="6" fill="#65d83c" />
      <circle cx="29" cy="84" r="6" fill="#c86fe0" />
    </g>
  </Art>
);

const AppStore = () => (
  <Art>
    <defs><linearGradient id="as" x1="0" y1="0" x2="0" y2="1"><stop offset="0" stopColor="#27c7fb" /><stop offset="1" stopColor="#1c62ec" /></linearGradient></defs>
    <circle cx="54" cy="58" r="51" fill="#e7e9eb" />
    <circle cx="54" cy="58" r="46.500" fill="url(#as)" />
    <path d="M60 29 L40 66 M48 29 L52 36 M60 46 L77 87 M26 66 H83 M32 78 L29 84" stroke="#f3f6f9" strokeWidth="8.500" strokeLinecap="round" fill="none" />
  </Art>
);

const Notes = () => (
  <Art>
    <g transform="rotate(-9 54 57)">
      <rect x="15" y="12" width="78" height="94" fill="#8f7a2c" />
      <rect x="15" y="10" width="78" height="94" fill="#fbfbfa" />
      <rect x="15" y="10" width="78" height="16" fill="#fdd43c" />
      <path d="M15 28 H93" stroke="#777" strokeWidth="1" strokeDasharray="1 1.500" />
      <path d="M15 36 H93 M15 43 H93 M15 50 H93 M15 57 H93 M15 64 H93 M15 71 H93 M15 78 H93 M15 85 H93 M15 92 H93 M15 99 H93" stroke="#c4c4c8" strokeWidth="1" />
    </g>
  </Art>
);

const XamppShape = () => (
  <>
    <circle cx="82" cy="40" r="21" fill="none" stroke="#77797b" strokeWidth="5" strokeDasharray="4.500 4.300" />
    <circle cx="82" cy="40" r="14" fill="none" stroke="#808284" strokeWidth="10" />
    <path d="M18 14 V60 H54 V14 Z" fill="#235ba5" />
    <path d="M18 26 H54 V40 H18 Z" fill="#8445cf" />
    <ellipse cx="36" cy="14" rx="18" ry="5" fill="#4b9be8" />
    <path d="M32 25 H75 Q82 26 83 34 V64 H32 Z" fill="#1a2d7c" />
    <path d="M30 25 H75 Q80 27 80 34 V66 H30 Z" fill="#fff" />
    <rect x="36" y="32" width="38" height="34" rx="4" fill="#f47a24" />
    <path d="M44 42 Q54 36 52 48 Q44 60 46 64 M66 42 Q58 36 58 48 Q68 60 62 66 M46 51 H66" fill="none" stroke="#fff" strokeWidth="6" strokeLinecap="round" />
    <path d="M14 56 L55 66 L92 56 L94 86 L55 108 L16 86 Z" fill="#a5602f" />
    <path d="M55 66 L94 58 V86 L55 108 Z" fill="#8a4c24" />
    <path d="M14 48 L55 66 L40 88 L-2 66 Z" fill="#e58b4d" />
    <path d="M98 48 L55 66 L72 88 L112 66 Z" fill="#f09a5c" />
  </>
);

const Xampp = () => <Art><XamppShape /></Art>;

const Word = () => (
  <Art>
    <defs><linearGradient id="wd" x1="0" y1="0" x2="0" y2="1"><stop offset="0" stopColor="#3d70bd" /><stop offset="1" stopColor="#264f96" /></linearGradient></defs>
    <rect x="60" y="18" width="45" height="80" fill="#fff" />
    <path d="M62 31 H96 M62 42 H96 M62 52 H96 M62 63 H96 M62 74 H96 M62 85 H96" stroke="#3b3b3b" strokeWidth="4" />
    <path d="M68 31 H84 M84 42 H96 M62 52 H68 M68 63 H84 M62 74 H68 M76 85 H84" stroke="#5c82bb" strokeWidth="4" />
    <path d="M4 18 L62 7 V109 L4 98 Z" fill="url(#wd)" />
    <text x="33" y="74" fontSize="42" fontWeight="700" textAnchor="middle" fill="#eef4fc" fontFamily="Roboto, sans-serif">W</text>
  </Art>
);

const Telegram = () => (
  <Art>
    <defs><linearGradient id="tg" x1="0" y1="0" x2="0" y2="1"><stop offset="0" stopColor="#38a9e8" /><stop offset="1" stopColor="#1180bd" /></linearGradient></defs>
    <circle cx="54" cy="57" r="52" fill="url(#tg)" />
    <path d="M79 34 L18 58 L36 68 L42 82 L52 74 L68 85 Z" fill="#f2f8fc" />
    <path d="M36 68 L79 34 L46 68 L42 82 Z" fill="#c3d8e6" />
  </Art>
);

const Excel = () => (
  <Art>
    <defs><linearGradient id="xl" x1="0" y1="0" x2="0" y2="1"><stop offset="0" stopColor="#2f9a60" /><stop offset="1" stopColor="#1f6e43" /></linearGradient></defs>
    <rect x="60" y="18" width="45" height="80" fill="#fff" />
    <path d="M62 33 H76 M80 33 H96" stroke="#3d3d3d" strokeWidth="9" />
    <path d="M62 46 H76 M80 46 H96 M62 58 H76 M80 58 H96 M62 71 H76 M80 71 H96 M62 84 H76 M80 84 H96" stroke="#559672" strokeWidth="9" />
    <path d="M4 18 L62 7 V109 L4 98 Z" fill="url(#xl)" />
    <text x="33" y="75" fontSize="46" fontWeight="700" textAnchor="middle" fill="#eefaf2" fontFamily="Roboto, sans-serif">X</text>
  </Art>
);

const Acrobat = () => (
  <Art>
    <rect x="0" y="2" width="108" height="106" rx="20" fill="#b11010" />
    <path d="M53 24 C45 24 45 36 50 48 C56 62 68 74 80 75 C92 75 88 64 72 64 C54 64 38 70 28 78 C20 84 24 90 31 86 C40 80 52 56 55 40 C57 29 57 24 53 24 Z" fill="none" stroke="#fff" strokeWidth="5.500" strokeLinejoin="round" />
  </Art>
);

const KEYS = ["AC", "+/-", "%", "7", "8", "9", "4", "5", "6", "1", "2", "3"];
const Calculator = () => (
  <Art>
    <g transform="rotate(-9 54 57)" fontFamily="Roboto, sans-serif">
      <rect x="16" y="10" width="76" height="96" fill="#222" />
      <rect x="16" y="10" width="76" height="19" fill="#27353a" />
      <text x="90" y="25" fontSize="14" fontWeight="300" textAnchor="end" fill="#b9c6ca">3.141593</text>
      <rect x="16" y="29" width="57" height="74" fill="#c0c3c6" />
      <rect x="73" y="29" width="19" height="74" fill="#f58220" />
      <path d="M16 44 H92 M16 59 H92 M16 74 H92 M16 89 H92 M35 29 V89 M54 29 V103 M73 29 V103" stroke="#77797b" strokeWidth="1" />
      {KEYS.map((k, i) => (
        <text key={k} x={25 + (i % 3) * 19} y={40 + Math.floor(i / 3) * 15} fontSize={i < 3 ? 7 : 9} textAnchor="middle" fill="#555">{k}</text>
      ))}
      <text x="25" y="99" fontSize="9" textAnchor="middle" fill="#555">0</text>
      {["÷", "×", "−", "+", "="].map((k, i) => (
        <text key={k} x="82" y={40 + i * 15} fontSize="9" textAnchor="middle" fill="#fde0c2">{k}</text>
      ))}
    </g>
  </Art>
);

const Papers = () => (
  <Art>
    <path d="M78 16 H91 V50 H78 Z" fill="#e5e5e5" />
    <path d="M80 20 H90 V24 H80 Z" fill="#4a4044" />
    <path d="M20 7 H58 Q74 10 84 28 Q91 40 91 54 V109 H16 V13 H20 Z" fill="#fcfcfc" />
    <path d="M20 10 H58 M18 13 H60" stroke="#d9d9d9" strokeWidth="1" />
    <path d="M58 7 Q68 18 64 34 Q82 32 90 50 Q84 22 58 7 Z" fill="#dcdcdc" />
    <path d="M58 7 Q72 18 64 34" fill="none" stroke="#b8b8b8" strokeWidth="1" />
  </Art>
);

const Thumb = () => (
  <Art>
    <rect x="0" y="9" width="108" height="98" rx="1" fill="#f0f0f0" />
    <rect x="5" y="22" width="98" height="69" fill="#e2e2e2" />
    <circle cx="4" cy="12" r="1.200" fill="#e33" /><circle cx="8" cy="12" r="1.200" fill="#d90" /><circle cx="12" cy="12" r="1.200" fill="#2a2" />
    <rect x="19" y="19" width="70" height="5" fill="#fff" />
    <g fontSize="4" fill="#222" textAnchor="middle" fontFamily="Roboto, sans-serif">
      <text x="25" y="23">General</text><text x="40" y="23">Services</text><text x="56" y="23">Network</text><text x="72" y="23">Volumes</text><text x="85" y="23">Log</text>
      <text x="17" y="33" fontWeight="700">Status:</text><text x="20" y="38" fontWeight="700">IP Address:</text><text x="87" y="38">192.168.64.2</text>
      {["Start", "Stop", "Go to Application", "Open Terminal", "Visit Apachefriends", "Get Support"].map((t, i) => (
        <g key={t}>
          <rect x="12" y={44 + i * 7} width="84" height="4.500" fill="#fff" />
          <text x="54" y={47.500 + i * 7}>{t}</text>
        </g>
      ))}
    </g>
    <circle cx="93" cy="31" r="1.500" fill="#2c3" />
    <g transform="translate(68 73) scale(.36)"><XamppShape /></g>
  </Art>
);

const Trash = () => (
  <Art>
    <defs><linearGradient id="tr" x1="0" y1="0" x2="1" y2="0"><stop offset="0" stopColor="#55595a" /><stop offset=".35" stopColor="#7b8081" /><stop offset="1" stopColor="#3f4344" /></linearGradient></defs>
    <path d="M13 18 L24 100 Q54 118 82 100 L94 18 Z" fill="url(#tr)" />
    <ellipse cx="53.500" cy="18" rx="41" ry="11" fill="#34383a" stroke="#888d8f" strokeWidth="2" />
    <path d="M20 14 L38 3 L44 8 L60 5 L74 8 L88 14 L80 24 L62 27 L44 26 L26 24 Z" fill="#e8e8e6" />
    <path d="M36 18 L46 12 L52 17 L42 23 Z" fill="#35c2b8" /><path d="M62 12 L72 16 L66 22 L58 18 Z" fill="#3e66c4" /><path d="M70 18 L78 16 L76 23 Z" fill="#d0562b" /><path d="M26 14 L32 11 L34 17 L28 20 Z M50 8 L56 8 L54 14 Z" fill="#333" />
    <path d="M42 44 Q54 34 66 38 Q60 50 46 46 Z" fill="#9da2a3" opacity=".6" />
  </Art>
);

type DockApp = { name: string; art: ReactNode; dot?: boolean };
const GROUPS: DockApp[][] = [
  [
    { name: "Finder", art: <Finder />, dot: true },
    { name: "Launchpad", art: <Launchpad /> },
    { name: "Firefox", art: <Firefox />, dot: true },
    { name: "Safari", art: <Safari />, dot: true },
    { name: "Sublime Text", art: <Sublime />, dot: true },
    { name: "Mail", art: <Mail />, dot: true },
    { name: "Reminders", art: <Reminders /> },
    { name: "App Store", art: <AppStore /> },
    { name: "Notes", art: <Notes /> },
  ],
  [
    { name: "XAMPP", art: <Xampp />, dot: true },
    { name: "Word", art: <Word />, dot: true },
    { name: "Telegram", art: <Telegram />, dot: true },
    { name: "Excel", art: <Excel />, dot: true },
    { name: "Acrobat", art: <Acrobat />, dot: true },
    { name: "Calculator", art: <Calculator />, dot: true },
  ],
  [
    { name: "Documents", art: <Papers /> },
    { name: "XAMPP window", art: <Thumb /> },
    { name: "Trash", art: <Trash /> },
  ],
];

/* Rocky wallpaper showing in the bottom corners, behind the dock */
function Rocks() {
  return (
    <>
      <svg viewBox="0 0 120 152" className="absolute bottom-0 left-0 h-[152px] w-[120px]" aria-hidden="true">
        <rect width="120" height="152" fill="#060505" />
        <path d="M0 70 L30 84 L52 98 L80 110 L110 152 H0 Z" fill="#1b1718" />
        <path d="M10 90 L34 96 L50 118 L36 130 L14 112 Z M52 110 L78 118 L96 144 L70 146 Z" fill="#262021" />
        <path d="M14 20 L40 30 L34 44 L10 38 Z M50 40 L80 52 L70 62 L48 54 Z" fill="#121012" />
      </svg>
      <svg viewBox="0 0 120 152" className="absolute right-0 bottom-0 h-[152px] w-[120px]" aria-hidden="true">
        <rect width="120" height="152" fill="#161824" />
        <path d="M10 34 L34 44 L44 64 L40 96 L54 120 L48 152 H8 Z" fill="#3d5272" />
        <path d="M60 20 L84 26 L74 48 L62 44 Z M88 40 L104 30 L112 52 L98 66 Z M64 66 L78 60 L84 84 L70 92 Z M58 110 L74 100 L80 130 L62 140 Z" fill="#34405a" />
        <path d="M20 50 L30 58 L26 78 L18 70 Z M30 96 L40 104 L36 124 L26 116 Z M44 40 L58 48 L56 70 Z" fill="#141621" />
        <path d="M90 74 L108 70 L116 96 L100 108 L92 94 Z M88 118 L104 114 L112 140 L94 146 Z" fill="#282a3a" />
        <path d="M0 0 H120 V12 L80 16 L40 10 L0 14 Z" fill="#0a0b12" />
      </svg>
    </>
  );
}

function Dock() {
  return (
    <footer className="relative z-10 mx-[105px] mt-1 flex h-[148px] shrink-0 rounded-t-xl border-x-2 border-t-2 border-[#4c484b] bg-linear-[90deg,#1f1a1b_0%,#221e20_45%,#262d3d_56%,#343643_68%,#7a3c2b_76%,#93432a_82%,#6b3a31_88%,#3a2f37_94%,#2c2a36_100%] px-[5px] pt-[10px] shadow-[0_0_80px_rgba(0,0,0,0.2)]">
      {GROUPS.map((group, g) => (
        <React.Fragment key={group[0].name}>
          {g > 0 && (
            <div className="flex h-28 w-14 items-center justify-center">
              <span className={g === 1 ? "h-[72px] w-[2px] bg-[#5c5a5f]" : "h-[108px] w-[2px] bg-[#b4826f]"} />
            </div>
          )}
          {group.map((a) => (
            <button type="button" key={a.name} aria-label={a.name} className="flex flex-1 flex-col items-center">
              {a.art}
              {a.dot && <span className="mt-3 size-2 rounded-full bg-[#b0a9ac]" />}
            </button>
          ))}
        </React.Fragment>
      ))}
    </footer>
  );
}

export default function App() {
  return (
    <div className="relative flex h-screen flex-col overflow-hidden bg-[#060a12] font-[Roboto,'Noto_Sans_Khmer',sans-serif]">
      <Rocks />
      <MenuBar />
      <section className="relative mt-px mr-[10px] flex min-h-0 flex-1 flex-col overflow-hidden rounded-[10px] bg-[#e8ebee]" aria-label="Browser window">
        <div className="shrink-0 font-[Inter,sans-serif]">
          <Toolbar />
          <TabBar />
        </div>
        <AppHeader />
        <div className="flex min-h-0 flex-1">
          <Sidebar />
          <SalePanel />
        </div>
      </section>
      <Dock />
    </div>
  );
}
